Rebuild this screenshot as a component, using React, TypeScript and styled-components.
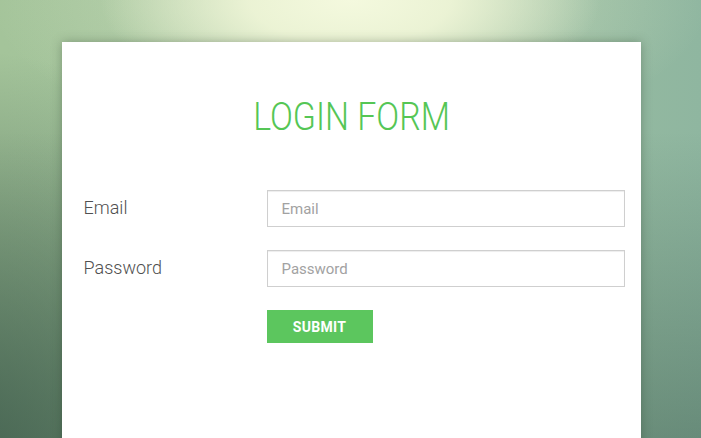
import * as React from 'react'
import styled, { createGlobalStyle } from 'styled-components'

const GlobalStyle = createGlobalStyle`
  html, body {
    margin: 0;
    padding: 0;
    height: 100%;
    overflow: hidden;
  }
  body {
    font-family: Roboto, 'Liberation Sans', sans-serif;
  }
`

const Page = styled.div`
  width: 701px;
  height: 438px;
  display: flex;
  justify-content: center;
  padding-top: 42px;
  box-sizing: border-box;
  overflow: hidden;
  background:
    radial-gradient(ellipse 250px 110px at 350px 0px, rgba(244, 249, 222, 1) 0%, rgba(240, 246, 216, 0.9) 40%, rgba(225, 236, 200, 0) 100%),
    radial-gradient(ellipse 360px 150px at 350px 0px, rgba(228, 238, 205, 0.6) 0%, rgba(228, 238, 205, 0) 100%),
    radial-gradient(ellipse 380px 420px at -40px 470px, rgba(62, 92, 76, 0.85) 0%, rgba(62, 92, 76, 0.35) 60%, rgba(62, 92, 76, 0) 100%),
    linear-gradient(180deg, rgba(30, 60, 50, 0) 30%, rgba(30, 60, 50, 0.35) 100%),
    linear-gradient(90deg, #a4c49a 0%, #9fc19f 55%, #8fb6a0 100%);
`

const Card = styled.div`
  width: 579px;
  height: 420px;
  margin-left: 1px;
  background: #ffffff;
  box-shadow: 0 0 10px rgba(40, 60, 40, 0.35);
  padding: 53px 16px 0 22px;
  box-sizing: border-box;
`

const Title = styled.h1`
  margin: 0 0 51px;
  padding-right: 5px;
  text-align: center;
  font-family: Roboto, 'Liberation Sans', sans-serif;
  font-weight: 300;
  font-size: 38px;
  line-height: 44px;
  color: #55c655;
`

const TitleText = styled.span`
  display: inline-block;
  transform: scaleX(0.89);
`

const Form = styled.form`
  display: grid;
  grid-template-columns: 183px 1fr;
  row-gap: 23px;
  align-items: center;
`

const Label = styled.label`
  font-size: 18px;
  font-weight: 300;
  color: #505050;
  margin-top: -3px;
`

const Input = styled.input`
  height: 37px;
  width: 100%;
  box-sizing: border-box;
  border: 1px solid #cfcfcf;
  border-radius: 0;
  box-shadow: inset 0 1px 1px rgba(0, 0, 0, 0.075);
  padding: 0 14px;
  font-family: Roboto, 'Liberation Sans', sans-serif;
  font-size: 15px;
  color: #555;
  outline: none;
  &::placeholder {
    color: #a2a2a2;
  }
`

const Spacer = styled.div``

const Submit = styled.button`
  justify-self: start;
  width: 106px;
  height: 33px;
  border: none;
  border-radius: 0;
  background: #5cc65e;
  color: #ffffff;
  font-family: Roboto, 'Liberation Sans', sans-serif;
  font-weight: 700;
  font-size: 14px;
  letter-spacing: 0.3px;
  cursor: pointer;
`

export default function App() {
  return (
    <>
      <GlobalStyle />
      <Page>
        <Card>
          <Title>
            <TitleText>LOGIN FORM</TitleText>
          </Title>
          <Form onSubmit={(e) => e.preventDefault()}>
            <Label htmlFor='email'>Email</Label>
            <Input id='email' type='email' placeholder='Email' />
            <Label htmlFor='password'>Password</Label>
            <Input id='password' type='password' placeholder='Password' />
            <Spacer />
            <Submit type='submit'>SUBMIT</Submit>
          </Form>
        </Card>
      </Page>
    </>
  )
}
